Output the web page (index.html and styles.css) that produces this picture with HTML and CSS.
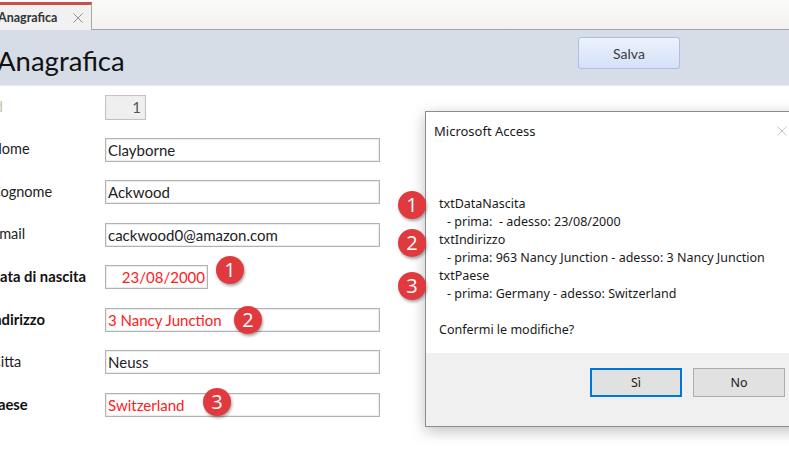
FILE: index.html
```html
<!DOCTYPE html>
<html lang="it">
<head>
<meta charset="utf-8">
<title>Anagrafica</title>
<link rel="stylesheet" href="styles.css">
</head>
<body>
<div class="tabbar">
  <div class="tab">
    <span class="tab-label">Anagrafica</span>
    <svg class="tab-close" width="10" height="10" viewBox="0 0 10 10"><path d="M0.5 0.5 L9.5 9.5 M9.5 0.5 L0.5 9.5" stroke="#8f8f8f" stroke-width="1" fill="none"/></svg>
  </div>
  <div class="tab-rest"></div>
</div>
<div class="header">
  <h1 class="title">Anagrafica</h1>
  <button class="btn-salva">Salva</button>
</div>
<div class="form">
  <div class="lbl lbl-id">Id</div><div class="box box-id">1</div>
  <div class="lbl">Nome</div><div class="box">Clayborne</div>
  <div class="lbl">Cognome</div><div class="box">Ackwood</div>
  <div class="lbl">Email</div><div class="box">cackwood0@amazon.com</div>
  <div class="lbl bold">Data di nascita</div><div class="box box-date changed">23/08/2000</div>
  <div class="lbl bold">Indirizzo</div><div class="box changed">3 Nancy Junction</div>
  <div class="lbl">Citta</div><div class="box">Neuss</div>
  <div class="lbl bold">Paese</div><div class="box changed">Switzerland</div>
</div>

<div class="dialog">
  <div class="dlg-title"><span>Microsoft Access</span>
    <svg class="dlg-x" width="10" height="10" viewBox="0 0 10 10"><path d="M0.5 0.5 L9.5 9.5 M9.5 0.5 L0.5 9.5" stroke="#c4c4c4" stroke-width="1" fill="none"/></svg>
  </div>
  <div class="dlg-body">
    <div>txtDataNascita</div>
    <div class="ind">- prima:&nbsp; - adesso: 23/08/2000</div>
    <div>txtIndirizzo</div>
    <div class="ind">- prima: 963 Nancy Junction - adesso: 3 Nancy Junction</div>
    <div>txtPaese</div>
    <div class="ind">- prima: Germany - adesso: Switzerland</div>
    <div class="blank"></div>
    <div>Confermi le modifiche?</div>
  </div>
  <div class="dlg-foot">
    <button class="dbtn dbtn-default">Sì</button>
    <button class="dbtn">No</button>
  </div>
</div>

<span class="badge b-f1">1</span>
<span class="badge b-f2">2</span>
<span class="badge b-f3">3</span>
<span class="badge b-d1">1</span>
<span class="badge b-d2">2</span>
<span class="badge b-d3">3</span>
</body>
</html>
```
FILE: styles.css
```css
html, body {
  margin: 0;
  padding: 0;
  width: 789px;
  height: 450px;
  overflow: hidden;
  background: #ffffff;
  font-family: Lato, "Liberation Sans", sans-serif;
  color: #222;
}

.tabbar {
  display: flex;
  height: 30px;
  background: linear-gradient(#fbfbfa, #f2f1f0);
}
.tab {
  width: 92px;
  box-sizing: border-box;
  border-top: 3px solid #c4504e;
  border-right: 1px solid #a9a9a9;
  background: #f1f1f1;
  display: flex;
  align-items: center;
  margin-top: 2px;
  gap: 16px;
}
.tab-label {
  font-size: 12.5px;
  font-weight: bold;
  color: #333;
  margin-left: -2px;
}
.tab-close {
  display: block;
}
.tab-rest {
  flex: 1;
  border-bottom: 1px solid #a3a3a3;
}

.header {
  height: 55px;
  background: #d6dde6;
  display: flex;
  align-items: flex-start;
  border-bottom: 1px solid #e4e8ee;
}
.title {
  margin: 13px 0 0 -3px;
  font-size: 27.5px;
  font-weight: normal;
  color: #111;
  line-height: 36px;
  width: 581px;
}
.btn-salva {
  margin-top: 7px;
  width: 102px;
  height: 32px;
  border: 1px solid #a9c1e9;
  border-radius: 3px;
  background: linear-gradient(#edf2fc, #d3e1f8);
  font-family: Lato, "Liberation Sans", sans-serif;
  font-size: 14px;
  color: #3c3c3c;
  padding: 0;
}

.form {
  display: grid;
  grid-template-columns: 114px max-content;
  grid-auto-rows: 24px;
  row-gap: 18.5px;
  margin-left: -9px;
  padding-top: 9px;
  align-items: center;
}
.lbl {
  font-size: 14.5px;
  color: #1e1e1e;
  margin-top: -2px;
}
.lbl.bold {
  font-weight: bold;
  color: #111;
  margin-left: -2px;
  font-size: 14.8px;
}
.lbl-id { color: #c9bfae; }
.box {
  box-sizing: border-box;
  width: 275px;
  height: 24px;
  border: 1px solid #b3b3b3;
  box-shadow: inset 0 0 0 1px #ececec;
  font-size: 15px;
  line-height: 22px;
  padding-left: 2px;
  color: #222;
  white-space: nowrap;
}
.box-id {
  width: 41px;
  height: 25px;
  background: #efefef;
  text-align: right;
  padding-right: 4px;
  color: #555;
  border-color: #c2c2c2;
}
.box-date {
  width: 103px;
  text-align: right;
  padding-right: 2px;
}
.changed { color: #ff2020; }

.dialog {
  position: absolute;
  left: 425px;
  top: 111px;
  width: 380px;
  height: 316px;
  box-sizing: border-box;
  border: 1px solid #8c8c8c;
  background: #fff;
  box-shadow: 0 4px 14px rgba(0,0,0,0.25);
  display: flex;
  flex-direction: column;
  font-family: "Noto Sans", "Open Sans", sans-serif;
  font-size: 12.5px;
  color: #1a1a1a;
}
.dlg-title {
  display: flex;
  justify-content: space-between;
  height: 38px;
  align-items: center;
  padding-left: 8px;
  padding-right: 27px;
  font-size: 13px;
}
.dlg-x {
  display: block;
  margin-right: -10px;
}
.dlg-body {
  flex: 1;
  padding: 45px 0 0 13px;
  line-height: 18px;
}
.dlg-body .ind { padding-left: 8px; }
.dlg-body .blank { height: 18px; }
.dlg-foot {
  height: 58px;
  background: #f0f0f0;
  display: flex;
  justify-content: flex-start;
  align-items: flex-start;
  padding: 15px 0 0 164px;
  gap: 11px;
}
.dbtn {
  width: 92px;
  height: 29px;
  box-sizing: border-box;
  background: #e1e1e1;
  border: 1px solid #adadad;
  font-family: "Noto Sans", "Open Sans", sans-serif;
  font-size: 12.5px;
  color: #1a1a1a;
  padding: 0;
}
.dbtn-default {
  border: 2px solid #0078d7;
}

.badge {
  position: absolute;
  width: 28px;
  height: 28px;
  border-radius: 50%;
  background: #e0393e;
  color: #fff;
  font-family: "Open Sans", "Noto Sans", sans-serif;
  font-size: 20px;
  line-height: 28px;
  text-align: center;
  box-shadow: 1px 2px 3px rgba(0,0,0,0.35);
}
.b-f1 { left: 216px; top: 256px; }
.b-f2 { left: 234px; top: 306px; }
.b-f3 { left: 203px; top: 388px; }
.b-d1 { left: 398px; top: 191px; }
.b-d2 { left: 398px; top: 229px; }
.b-d3 { left: 398px; top: 272px; }
```
